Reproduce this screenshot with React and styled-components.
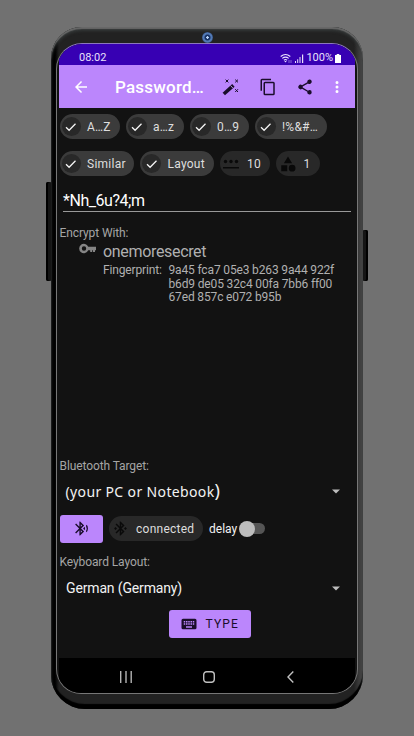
import React from "react";
import styled, { createGlobalStyle } from "styled-components";

const Global = createGlobalStyle`
  * { box-sizing: border-box; }
  body { margin: 0; background: #717171; font-family: Roboto, sans-serif; }
  svg { display: block; flex: none; }
`;

const Stage = styled.main`
  position: relative;
  width: 414px;
  height: 736px;
  padding: 27px 0 0 51px;
  background: #717171;
  overflow: hidden;
`;
const SideKey = styled.i`
  position: absolute;
  left: ${(p) => p.$x}px;
  top: ${(p) => p.$y}px;
  width: 6px;
  height: ${(p) => p.$h}px;
  border-radius: 2px;
  background: #151515;
  box-shadow: inset ${(p) => p.$edge}px 0 0 #000;
`;
const Phone = styled.div`
  position: relative;
  width: 312px;
  height: 682px;
  padding: 16px 4px 15px 5px;
  border-radius: 31px 31px 34px 34px;
  background: linear-gradient(90deg, #000 0 4px, #222 8px 303px, #3b3b3b 308px, #4b4b4b 312px);
  box-shadow: inset 0 2px 1px #686868, inset 0 4px 3px #343838, inset 0 -5px 1px #000;
`;
const Camera = styled.i`
  position: absolute;
  left: 151px;
  top: 5px;
  width: 11px;
  height: 11px;
  border-radius: 50%;
  background: radial-gradient(circle, #b8d4f8 0 1px, #152f60 1.5px 2.5px, #5279b5 3.5px 4.5px, #344f7a 5.5px);
`;
const Screen = styled.div`
  width: 302px;
  height: 651px;
  border: 1px solid #777;
  border-top-color: #8c78bd;
  border-radius: 26px 26px 25px 25px;
  background: #121212;
  overflow: hidden;
  display: flex;
  flex-direction: column;
`;
const StatusBar = styled.header`
  flex: none;
  height: 21px;
  margin: 0 2px;
  padding: 6px 14px 0 20px;
  display: flex;
  justify-content: space-between;
  background: #3700b3;
  color: #e9e1fa;
  font-size: 11px;
  line-height: 16px;
`;
const StatusIcons = styled.div`
  display: flex;
  align-items: center;
  height: 16px;
  gap: 2px;
`;
const Toolbar = styled.nav`
  flex: none;
  height: 43px;
  margin: 0 2px;
  padding: 0 9px 0 13px;
  display: flex;
  align-items: center;
  background: #bb86fc;
  color: #1a0d2b;
`;
const Title = styled.h1`
  margin: 0 14px 0 25px;
  width: 93px;
  color: #fff;
  font-size: 17px;
  font-weight: 500;
  letter-spacing: 0.2px;
  white-space: nowrap;
`;
const Actions = styled.div`
  flex: 1;
  display: grid;
  grid-template-columns: 37px 37px 32px 18px;
`;
const Body = styled.section`
  flex: none;
  height: 550px;
  padding: 6px 4px 0 2.5px;
  display: flex;
  flex-direction: column;
`;
const ChipRow = styled.div`
  display: flex;
  gap: 6px;
  height: 25px;
  margin-bottom: 12px;
`;
const ChipBox = styled.span`
  flex: none;
  width: ${(p) => p.$w}px;
  height: 25px;
  padding-left: 2px;
  border-radius: 13px;
  display: flex;
  align-items: center;
  gap: 6.5px;
  background: ${(p) => (p.$dim ? "#282828" : "#3b3b3b")};
  color: #dedede;
  font-size: 12px;
  letter-spacing: 0.25px;
  white-space: nowrap;
`;
const ChipIcon = styled.span`
  width: 19px;
  height: 19px;
  border-radius: 50%;
  display: grid;
  place-items: center;
  background: ${(p) => (p.$dim ? "transparent" : "#282828")};
`;
const Password = styled.div`
  height: 24px;
  margin: 0 2px 0 3.5px;
  border-bottom: 1px solid #999;
  color: #fff;
  font-size: 16px;
  line-height: 25px;
  letter-spacing: -0.45px;
`;
const Label = styled.div`
  height: 16px;
  margin-top: ${(p) => p.$top}px;
  color: #a5a5a5;
  font-size: 12px;
  line-height: 16px;
  letter-spacing: -0.1px;
`;
const KeyEntry = styled.div`
  display: grid;
  grid-template-columns: 24px 65.5px 1fr;
  margin: 1px 0 0 19.5px;
  color: #b0b0b0;
  font-size: 12px;
  line-height: 13.7px;
  letter-spacing: -0.15px;
`;
const KeyMark = styled.span`
  padding-top: 1px;
`;
const KeyName = styled.div`
  grid-column: 2 / 4;
  height: 22px;
  font-size: 16px;
  line-height: 20px;
  letter-spacing: -0.33px;
`;
const Fingerprint = styled.div`
  grid-column: ${(p) => p.$col};
  white-space: pre;
`;
const Select = styled.div`
  height: 24px;
  margin-top: ${(p) => p.$top}px;
  padding: 0 13px 0 6.5px;
  display: flex;
  align-items: center;
  justify-content: space-between;
  color: #f2f2f2;
  font-size: 14px;
  letter-spacing: -0.15px;
`;
const Target = styled.span`
  margin-left: -0.5px;
  padding-top: 1px;
  font-family: "Noto Sans", sans-serif;
  font-size: 14px;
  line-height: 24px;
  letter-spacing: 0.36px;
`;
const ClosingMark = styled.span`
  font-size: 18px;
  line-height: 1;
`;
const Controls = styled.div`
  display: flex;
  align-items: center;
  height: 29px;
  margin-top: 11px;
  gap: 6px;
`;
const Button = styled.button`
  width: ${(p) => p.$w}px;
  height: 28px;
  margin: ${(p) => p.$top ?? 0}px 0 0 ${(p) => p.$left ?? 0}px;
  padding: 0;
  border: 0;
  border-radius: 3px;
  display: flex;
  align-items: center;
  justify-content: center;
  align-self: center;
  gap: 7px;
  background: #bb86fc;
  color: #1a0d2b;
  font: 400 12px Roboto, sans-serif;
  letter-spacing: 1.2px;
`;
const Delay = styled.label`
  display: flex;
  align-items: center;
  margin-left: 0.5px;
  color: #f2f2f2;
  font-size: 12px;
`;
const Track = styled.span`
  width: 25px;
  height: 11px;
  margin-left: 2.5px;
  border-radius: 6px;
  background: #555;
  display: flex;
  align-items: center;
`;
const Knob = styled.i`
  flex: none;
  width: 16px;
  height: 16px;
  margin-left: -1px;
  border-radius: 50%;
  background: #bdbdbd;
`;
const NavBar = styled.footer`
  flex: 1;
  margin: 0 2px;
  padding: 2px 61px 0 60.5px;
  display: flex;
  align-items: center;
  justify-content: space-between;
  background: #000;
`;

const Glyph = ({ d, size = 16, color = "currentColor" }) => (
  <svg width={size} height={size} viewBox="0 0 24 24" fill={color}>
    <path d={d} />
  </svg>
);

const icons = {
  back: "M20 11H7.83l5.59-5.59L12 4l-8 8 8 8 1.41-1.41L7.83 13H20z",
  copy: "M16 1H4a2 2 0 0 0-2 2v14h2V3h12zm3 4H8a2 2 0 0 0-2 2v14a2 2 0 0 0 2 2h11a2 2 0 0 0 2-2V7a2 2 0 0 0-2-2zm0 16H8V7h11z",
  share: "M18 16.08c-.76 0-1.44.3-1.96.77L8.91 12.7a3.3 3.3 0 0 0 0-1.4l7.05-4.11A2.99 2.99 0 1 0 15 5c0 .24.04.47.09.7L8.04 9.81a3 3 0 1 0 0 4.38l7.12 4.16a2.92 2.92 0 1 0 2.84-2.27z",
  more: "M12 8a2 2 0 1 0 0-4 2 2 0 0 0 0 4zm0 2a2 2 0 1 0 0 4 2 2 0 0 0 0-4zm0 6a2 2 0 1 0 0 4 2 2 0 0 0 0-4z",
  shapes: "M12 2 6.5 11h11zM17.5 13a4.5 4.5 0 1 0 0 9 4.5 4.5 0 0 0 0-9zM3 13.5h8v8H3z",
  keyboard: "M20 5H4a2 2 0 0 0-2 2v10a2 2 0 0 0 2 2h16a2 2 0 0 0 2-2V7a2 2 0 0 0-2-2zm-9 3h2v2h-2zm0 3h2v2h-2zM8 8h2v2H8zm0 3h2v2H8zm-1 2H5v-2h2zm0-3H5V8h2zm9 7H8v-2h8zm0-4h-2v-2h2zm0-3h-2V8h2zm3 3h-2v-2h2zm0-3h-2V8h2z",
  btConnected: "m7 12-2-2-2 2 2 2zm10.71-4.29L12 2h-1v7.59L6.41 5 5 6.41 10.59 12 5 17.59 6.41 19 11 14.41V22h1l5.71-5.71-4.3-4.29zM13 5.83l1.88 1.88L13 9.59zm1.88 10.46L13 18.17v-3.76zM19 10l-2 2 2 2 2-2z",
  btSearch: "m14.24 12.01 2.32 2.32c.28-.72.44-1.51.44-2.33s-.16-1.59-.43-2.31zm5.29-5.3-1.26 1.26a8.9 8.9 0 0 1 0 8.06l1.2 1.2a10 10 0 0 0 .06-10.52zm-3.82 1L10 2H9v7.59L4.41 5 3 6.41 8.59 12 3 17.59 4.41 19 9 14.41V22h1l5.71-5.71-4.3-4.29zM11 5.83l1.88 1.88L11 9.59zm1.88 10.46L11 18.17v-3.76z",
};

const Wand = () => (
  <svg width="18" height="18" viewBox="0 0 18 18" stroke="currentColor" fill="none">
    <path d="M1.8 16 11.4 7.4" strokeWidth="3.6" />
    <path d="m8.6 7.6 2.2 2.4" stroke="#d5b5ff" strokeWidth=".8" />
    <path d="m3.6 1.6 2.8 2.8M6.4 1.6 3.6 4.4M13.2 1.6 16 4.4M16 1.6l-2.8 2.8M13.2 11.2 16 14M16 11.2 13.2 14" strokeWidth="1" />
  </svg>
);
const Check = () => (
  <svg width="12" height="12" viewBox="0 0 12 12" fill="none" stroke="#f5f5f5" strokeWidth="1.25">
    <path d="m1 6.2 3.1 3.1 6.4-6.5" />
  </svg>
);
const LengthIcon = () => (
  <svg width="18" height="12" viewBox="0 0 18 12" fill="#090909">
    <circle cx="3.5" cy="3.5" r="1.7" /><circle cx="9" cy="3.5" r="1.7" /><circle cx="14.5" cy="3.5" r="1.7" />
    <path d="M1 9h16v1.5H1z" />
  </svg>
);
const KeyIcon = () => (
  <svg width="18" height="12" viewBox="0 0 18 12" fill="#858585">
    <path fillRule="evenodd" d="M9.2 3.7A4.7 4.7 0 1 0 9.2 7.3h2V9h2V7.3h.8V9h2V7.3h1V3.7zM5 3.3a2.2 2.2 0 1 1 0 4.4 2.2 2.2 0 0 1 0-4.4z" />
  </svg>
);
const Wifi = () => (
  <svg width="13" height="11" viewBox="0 0 13 11" fill="none" stroke="#eee7ff" strokeWidth="1.1">
    <path d="M.7 3.5Q5.5-.6 10.3 3.5M2.3 5.4q3.2-2.6 6.4 0M3.9 7.2q1.6-1.3 3.2 0" />
    <path d="m4.3 8 1.2 1.5L6.7 8z" fill="#eee7ff" stroke="none" />
    <path d="M9 7v3M11 7v3" strokeWidth=".8" opacity=".55" />
  </svg>
);
const Signal = () => (
  <svg width="9" height="9" viewBox="0 0 9 9" fill="#e9e1fa">
    <path d="M0 7h1v2H0zM2.2 5.2h1V9h-1zM4.5 3h1v6h-1zM7 .5h1.2V9H7z" />
  </svg>
);
const Battery = () => (
  <svg width="6" height="9" viewBox="0 0 6 10" fill="#fff" preserveAspectRatio="none">
    <path d="M1.7 0h2.6v1.2H6V10H0V1.2h1.7z" />
  </svg>
);
const Caret = () => (
  <svg width="8" height="5" viewBox="0 0 8 5" fill="#bdbdbd"><path d="M0 .5h8l-4 4z" /></svg>
);

const Chip = ({ w, text, icon, dim }) => (
  <ChipBox $w={w} $dim={dim}>
    <ChipIcon $dim={dim}>{icon ?? <Check />}</ChipIcon>
    {text}
  </ChipBox>
);

export default function App() {
  return (
    <Stage>
      <Global />
      <SideKey $x={46} $y={182} $h={99} $edge={2} />
      <SideKey $x={362} $y={230} $h={51} $edge={-2} />
      <Phone>
        <Camera />
        <Screen>
          <StatusBar>
            <span>08:02</span>
            <StatusIcons><Wifi /><Signal />100%<Battery /></StatusIcons>
          </StatusBar>
          <Toolbar>
            <Glyph d={icons.back} color="#fff" size={18} />
            <Title>Password…</Title>
            <Actions>
              <Wand />
              <Glyph d={icons.copy} size={18} />
              <Glyph d={icons.share} size={18} />
              <Glyph d={icons.more} color="#fff" size={18} />
            </Actions>
          </Toolbar>
          <Body>
            <ChipRow>
              <Chip w={60} text="A…Z" />
              <Chip w={58} text="a…z" />
              <Chip w={59} text="0…9" />
              <Chip w={72} text="!%&#…" />
            </ChipRow>
            <ChipRow>
              <Chip w={74.5} text="Similar" />
              <Chip w={73.5} text="Layout" />
              <Chip w={50.5} text="10" dim icon={<LengthIcon />} />
              <Chip w={44} text="1" dim icon={<Glyph d={icons.shapes} color="#090909" size={18} />} />
            </ChipRow>
            <Password>*Nh_6u?4;m</Password>
            <Label $top={13}>Encrypt With:</Label>
            <KeyEntry>
              <KeyMark><KeyIcon /></KeyMark>
              <KeyName>onemoresecret</KeyName>
              <Fingerprint $col={2}>Fingerprint:</Fingerprint>
              <Fingerprint $col={3}>{"9a45 fca7 05e3 b263 9a44 922f\nb6d9 de05 32c4 00fa 7bb6 ff00\n67ed 857c e072 b95b"}</Fingerprint>
            </KeyEntry>
            <Label $top={153}>Bluetooth Target:</Label>
            <Select $top={5}>
              <Target>(your PC or Notebook<ClosingMark>)</ClosingMark></Target>
              <Caret />
            </Select>
            <Controls>
              <Button $w={43}><Glyph d={icons.btSearch} size={17} /></Button>
              <Chip w={94} text="connected" dim icon={<Glyph d={icons.btConnected} color="#090909" size={17} />} />
              <Delay>delay<Track><Knob /></Track></Delay>
            </Controls>
            <Label $top={11}>Keyboard Layout:</Label>
            <Select $top={6}>German (Germany)<Caret /></Select>
            <Button $w={82} $top={10} $left={7}><Glyph d={icons.keyboard} size={18} />TYPE</Button>
          </Body>
          <NavBar>
            <svg width="12" height="12" viewBox="0 0 12 12" fill="#b5b5b5"><path d="M0 0h1.4v12H0zM5.3 0h1.4v12H5.3zM10.5 0h1.4v12h-1.4z" /></svg>
            <svg width="12" height="12" viewBox="0 0 12 12" fill="none" stroke="#c0c0c0" strokeWidth="1.4"><rect x=".7" y=".7" width="10.6" height="10.6" rx="3" /></svg>
            <svg width="7" height="12" viewBox="0 0 7 12" fill="none" stroke="#c0c0c0" strokeWidth="1.4"><path d="M6.3.6 1 6l5.3 5.4" /></svg>
          </NavBar>
        </Screen>
      </Phone>
    </Stage>
  );
}
